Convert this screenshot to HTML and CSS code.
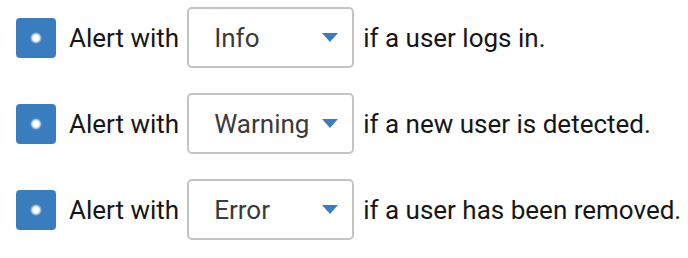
FILE: index.html
```html
<!DOCTYPE html>
<html lang="en">
<head>
  <meta charset="UTF-8">
  <title>Alert rules</title>
  <link rel="stylesheet" href="styles.css">
</head>
<body>
  <div class="rules">
    <div class="rule">
      <span class="check"></span>
      <span class="label">Alert with</span>
      <div class="select"><span class="value">Info</span><span class="arrow"></span></div>
      <span class="label">if a user logs in.</span>
    </div>
    <div class="rule">
      <span class="check"></span>
      <span class="label">Alert with</span>
      <div class="select"><span class="value">Warning</span><span class="arrow"></span></div>
      <span class="label">if a new user is detected.</span>
    </div>
    <div class="rule">
      <span class="check"></span>
      <span class="label">Alert with</span>
      <div class="select"><span class="value">Error</span><span class="arrow"></span></div>
      <span class="label">if a user has been removed.</span>
    </div>
  </div>
</body>
</html>
```

FILE: styles.css
```css
body { margin: 0; background: #fff; font-family: Roboto, "Noto Sans", sans-serif; color: #161616; }
.rules { display: flex; flex-direction: column; gap: 25px; padding: 7px 0 0 16px; }
.rule { display: flex; align-items: center; height: 61px; }

.check {
  width: 40px; height: 40px; border-radius: 4px; flex: none;
  background: radial-gradient(circle at 50% 50%, #fff 0, #fff 3px, rgba(255,255,255,0) 6px), #3a7dbf;
  margin-right: 13px;
}
.label { font-size: 26px; white-space: nowrap; }

.select {
  box-sizing: border-box; width: 167px; height: 61px; margin: 0 9px 0 8px; flex: none;
  border: 2px solid #c4c4c4; border-radius: 5px;
  display: flex; align-items: center; justify-content: space-between;
  padding: 0 14px 0 25px;
}
.value { font-size: 26px; color: #3a3a3a; }
.arrow {
  width: 0; height: 0;
  border-left: 8px solid transparent; border-right: 8px solid transparent;
  border-top: 9px solid #3a7dbf;
}
```
